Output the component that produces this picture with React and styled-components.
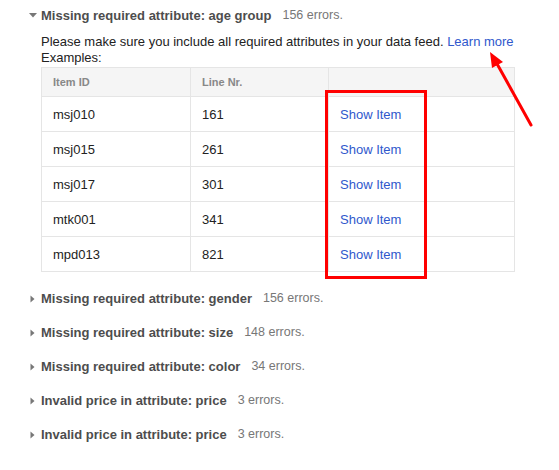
import styled, { createGlobalStyle } from "styled-components";

const GlobalStyle = createGlobalStyle`
    body {
        margin: 0;
        background: #fff;
        font-family: "Liberation Sans", Arial, sans-serif;
    }
`

const examples = [
    {id: 'msj010', line: 161},
    {id: 'msj015', line: 261},
    {id: 'msj017', line: 301},
    {id: 'mtk001', line: 341},
    {id: 'mpd013', line: 821},
]

const collapsed = [
    {label: 'Missing required attribute:', attr: 'gender', count: '156 errors.'},
    {label: 'Missing required attribute:', attr: 'size', count: '148 errors.'},
    {label: 'Missing required attribute:', attr: 'color', count: '34 errors.'},
    {label: 'Invalid price in attribute:', attr: 'price', count: '3 errors.'},
    {label: 'Invalid price in attribute:', attr: 'price', count: '3 errors.'},
]

function Toggle({open}) {
    return (
        <Arrow open={open}>
            {open ? (
                <svg width="8" height="5" viewBox="0 0 8 5"><path d="M0 0 L8 0 L4 4.5 Z" fill="#777"/></svg>
            ) : (
                <svg width="5" height="8" viewBox="0 0 5 8"><path d="M0.5 0.5 L4.5 4 L0.5 7.5 Z" fill="#777"/></svg>
            )}
        </Arrow>
    )
}

function IssueHeader({open, label, attr, count}) {
    return (
        <Header>
            <Toggle open={open}/>
            <Title>{label} {attr}</Title>
            <Count>{count}</Count>
        </Header>
    )
}

export default function App() {
    return (
        <Page>
            <GlobalStyle/>
            <Issue>
                <IssueHeader open label="Missing required attribute:" attr="age group" count="156 errors."/>
                <Body>
                    <Text>
                        Please make sure you include all required attributes in your data feed. <Link>Learn more</Link>
                    </Text>
                    <Text>Examples:</Text>
                    <TableWrap>
                        <Table>
                            <colgroup>
                                <col style={{width: 149}}/>
                                <col style={{width: 138}}/>
                                <col/>
                            </colgroup>
                            <thead>
                                <tr>
                                    <Th>Item ID</Th>
                                    <Th>Line Nr.</Th>
                                    <Th></Th>
                                </tr>
                            </thead>
                            <tbody>
                                {examples.map(e => (
                                    <tr key={e.id}>
                                        <Td>{e.id}</Td>
                                        <Td>{e.line}</Td>
                                        <Td><Link>Show Item</Link></Td>
                                    </tr>
                                ))}
                            </tbody>
                        </Table>
                        <Highlight/>
                    </TableWrap>
                </Body>
            </Issue>
            {collapsed.map((c, i) => (
                <Issue key={i}>
                    <IssueHeader {...c}/>
                </Issue>
            ))}
            <Pointer width="50" height="80" viewBox="0 0 50 80">
                <line x1="45" y1="75" x2="10" y2="12" stroke="#ff0000" strokeWidth="3" strokeLinecap="round"/>
                <path d="M4 2 L17 12 L6 18 Z" fill="#ff0000"/>
            </Pointer>
        </Page>
    )
}

const Page = styled.div`
    position: relative;
    width: 559px;
    padding: 5px 0 0 0;
    color: #222;
`

const Issue = styled.div`
    padding-bottom: 14px;
    &:first-child {
        padding-bottom: 16px;
    }
`

const Header = styled.div`
    display: flex;
    align-items: center;
    height: 20px;
    padding-left: 28px;
`

const Arrow = styled.span`
    display: flex;
    align-items: center;
    justify-content: center;
    width: 9px;
    margin-right: 4px;
    margin-top: ${p => p.open ? '0' : '1px'};
`

const Title = styled.span`
    font-size: 13px;
    font-weight: bold;
    color: #4d4d4d;
`

const Count = styled.span`
    font-size: 12.5px;
    color: #777;
    margin-left: 11px;
`

const Body = styled.div`
    padding-left: 41px;
    padding-top: 9px;
`

const Text = styled.div`
    font-size: 13px;
    line-height: 16px;
    color: #222;
`

const Link = styled.a`
    color: #2f58cc;
    cursor: pointer;
`

const TableWrap = styled.div`
    position: relative;
    width: 474px;
    margin-top: 1px;
`

const Table = styled.table`
    width: 474px;
    border-collapse: collapse;
    table-layout: fixed;
    border: 1px solid #e5e5e5;
`

const Th = styled.th`
    height: 28px;
    padding: 0 11px;
    text-align: left;
    font-size: 11px;
    font-weight: bold;
    color: #888;
    background: #f5f5f5;
    border: 1px solid #e5e5e5;
`

const Td = styled.td`
    height: 34px;
    padding: 0 11px;
    font-size: 13px;
    color: #222;
    border: 1px solid #e5e5e5;
`

const Highlight = styled.div`
    position: absolute;
    left: 284px;
    top: 23px;
    width: 96px;
    height: 183px;
    border: 3px solid #ff0000;
    pointer-events: none;
`

const Pointer = styled.svg`
    position: absolute;
    left: 486px;
    top: 50px;
`
